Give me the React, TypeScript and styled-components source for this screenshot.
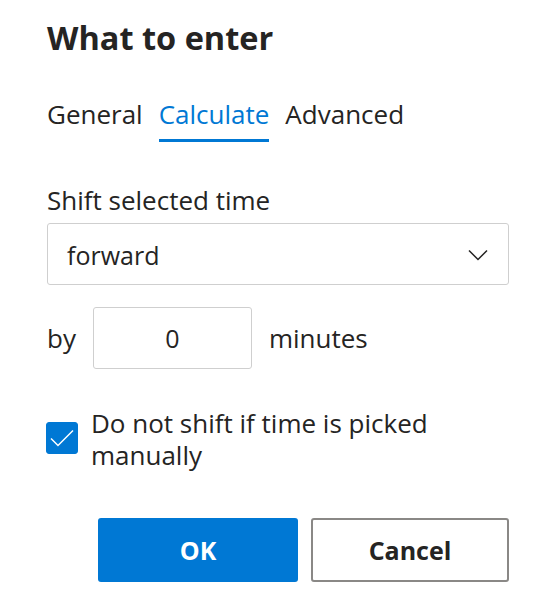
import React, { useState } from "react";
import styled, { createGlobalStyle } from "styled-components";

const GlobalStyle = createGlobalStyle`
  html, body {
    margin: 0;
    padding: 0;
    background: #ffffff;
  }
  body {
    font-family: "Segoe UI", "Open Sans", "Noto Sans", sans-serif;
    color: #252423;
  }
`;

const Dialog = styled.div`
  width: 554px;
  box-sizing: border-box;
  padding: 16px 45px 0 46px;
  display: flex;
  flex-direction: column;
`;

const Title = styled.h1`
  margin: 0 0 0 1px;
  font-size: 32.5px;
  font-weight: 700;
  line-height: 44px;
  color: #252423;
`;

const Tabs = styled.div`
  display: flex;
  gap: 16px;
  margin: 36px 0 0 1px;
`;

const Tab = styled.button<{ $active?: boolean }>`
  border: none;
  background: none;
  padding: 0 0 7px;
  font-family: inherit;
  font-size: 26px;
  line-height: 36px;
  color: ${(p) => (p.$active ? "#0078d4" : "#252423")};
  border-bottom: 3px solid ${(p) => (p.$active ? "#0078d4" : "transparent")};
  cursor: pointer;
`;

const Label = styled.div`
  margin: 40px 0 0 1px;
  font-size: 26px;
  line-height: 36px;
`;

const Select = styled.div`
  margin: 5px 0 0 1px;
  height: 62px;
  box-sizing: border-box;
  border: 1px solid #cfcfcf;
  border-radius: 3px;
  display: flex;
  align-items: center;
  justify-content: space-between;
  padding: 2px 20px 0 19px;
  font-size: 25px;
`;

const Row = styled.div`
  margin: 22px 0 0 1px;
  display: flex;
  align-items: center;
  gap: 17px;
  font-size: 26px;
`;

const NumberInput = styled.input`
  width: 159px;
  height: 62px;
  box-sizing: border-box;
  border: 1px solid #cfcfcf;
  border-radius: 3px;
  text-align: center;
  font-family: inherit;
  font-size: 25px;
  color: #252423;
  outline: none;
  padding: 0;
`;

const CheckRow = styled.label`
  margin-top: 38px;
  display: flex;
  align-items: flex-start;
  gap: 13px;
  font-size: 26px;
  line-height: 32px;
  cursor: pointer;
`;

const Box = styled.span<{ $checked: boolean }>`
  flex: none;
  width: 32px;
  height: 32px;
  margin-top: 15px;
  box-sizing: border-box;
  border-radius: 3px;
  background: ${(p) => (p.$checked ? "#0078d4" : "#ffffff")};
  border: 1px solid ${(p) => (p.$checked ? "#0078d4" : "#605e5c")};
  display: flex;
  align-items: center;
  justify-content: center;
`;

const Buttons = styled.div`
  margin-top: 47px;
  display: flex;
  justify-content: flex-end;
  gap: 13px;
`;

const Button = styled.button<{ $primary?: boolean }>`
  width: ${(p) => (p.$primary ? "200px" : "198px")};
  height: 64px;
  box-sizing: border-box;
  border-radius: 3px;
  font-family: inherit;
  font-size: 25px;
  font-weight: 700;
  cursor: pointer;
  background: ${(p) => (p.$primary ? "#0078d4" : "#ffffff")};
  color: ${(p) => (p.$primary ? "#ffffff" : "#252423")};
  border: ${(p) => (p.$primary ? "none" : "2px solid #8a8886")};
`;

export default function App() {
  const [tab, setTab] = useState("Calculate");
  const [checked, setChecked] = useState(true);

  return (
    <>
      <GlobalStyle />
      <Dialog>
        <Title>What to enter</Title>
        <Tabs>
          {["General", "Calculate", "Advanced"].map((t) => (
            <Tab key={t} $active={t === tab} onClick={() => setTab(t)}>
              {t}
            </Tab>
          ))}
        </Tabs>
        <Label>Shift selected time</Label>
        <Select>
          <span>forward</span>
          <svg width="20" height="12" viewBox="0 0 20 12" fill="none">
            <polyline points="1,1.5 10,10.5 19,1.5" stroke="#252423" strokeWidth="1.5" />
          </svg>
        </Select>
        <Row>
          <span>by</span>
          <NumberInput defaultValue="0" />
          <span>minutes</span>
        </Row>
        <CheckRow onClick={() => setChecked(!checked)}>
          <Box $checked={checked}>
            {checked && (
              <svg width="26" height="22" viewBox="0 0 26 22" fill="none">
                <polyline points="2,11.5 9,18.5 24,3.5" stroke="#ffffff" strokeWidth="1.5" />
              </svg>
            )}
          </Box>
          <span>Do not shift if time is picked manually</span>
        </CheckRow>
        <Buttons>
          <Button $primary>OK</Button>
          <Button>Cancel</Button>
        </Buttons>
      </Dialog>
    </>
  );
}
